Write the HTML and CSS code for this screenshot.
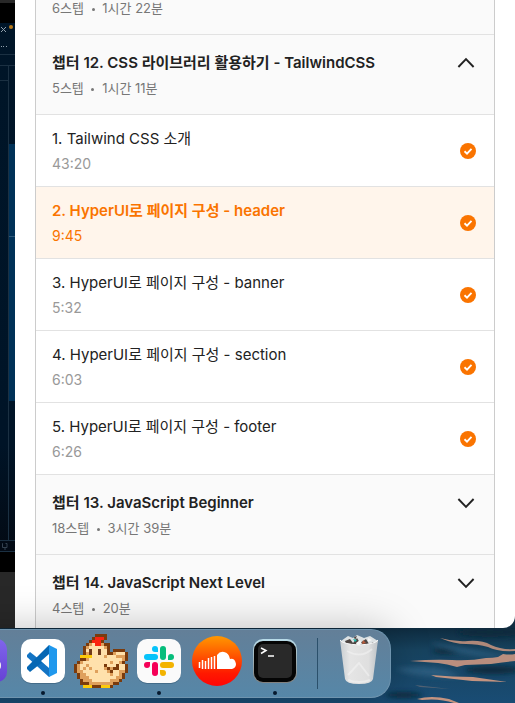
FILE: index.html
```html
<!DOCTYPE html>
<html lang="ko">
<head>
<meta charset="utf-8">
<meta name="viewport" content="width=device-width, initial-scale=1">
<title>챕터 목록</title>
<link rel="stylesheet" href="styles.css">
</head>
<body>
<svg class="defs" aria-hidden="true">
  <symbol id="check" viewBox="0 0 16 16"><circle cx="8" cy="8" r="8" fill="#fa7400"/><path d="M4.5 8.3 7 10.6l4.5-4.7" fill="none" stroke="#fff" stroke-width="1.9"/></symbol>
  <symbol id="chevron" viewBox="0 0 18 18"><path d="m1.4 5 7.6 7.8L16.6 5" fill="none" stroke="#222" stroke-width="1.9"/></symbol>
</svg>
<main class="screen">
  <div class="window">
    <svg class="editor" viewBox="0 0 15 628" preserveAspectRatio="none" aria-hidden="true">
      <defs><linearGradient id="navy" x2="0" y2="1"><stop offset="0" stop-color="#001528"/><stop offset=".8" stop-color="#001427"/><stop offset="1" stop-color="#030a14"/></linearGradient></defs>
      <path fill="#282828" d="M0 0h15v628H0z"/>
      <path fill="#000" d="M0 3h15v569H0z"/>
      <path fill="url(#navy)" d="M0 23h15v528H0z"/>
      <path fill="#003157" d="M8 144h7v257H8z"/>
      <path stroke="#1b3042" d="M0 54.5h15M0 65.5h15M0 80.5h8M8.500 65v475M0 540.500h15M0 551.500h15" fill="none"/>
      <path stroke="#2d5878" d="M9 236.500h6"/>
      <path stroke="#91a0ac" d="m1 27 5 5m0-5-5 5"/>
      <circle cx="11" cy="27" r="2" fill="#b87919"/>
      <path fill="#91a0ac" d="M1 46h1v1H1zM3 46h1v1H3zM6 46h1v1H6z"/>
      <path stroke="#344250" fill="none" d="M3 543.500h-.5v4H7v-4H5.500M4 549h2"/>
    </svg>
    <div class="page">
      <section class="course">
        <button class="chapter chapter-clipped"><span class="text"><span class="meta">6스텝 <i></i> 1시간 22분</span></span></button>
        <button class="chapter" aria-expanded="true"><span class="text"><span class="title">챕터 12. CSS 라이브러리 활용하기 - TailwindCSS</span><span class="meta">5스텝 <i></i> 1시간 11분</span></span><svg class="chevron up"><use href="#chevron"/></svg></button>
        <a class="lesson" href="#"><span class="text"><span class="title">1. Tailwind CSS 소개</span><span class="meta">43:20</span></span><svg class="check"><use href="#check"/></svg></a>
        <a class="lesson current" href="#"><span class="text"><span class="title">2. HyperUI로 페이지 구성 - header</span><span class="meta">9:45</span></span><svg class="check"><use href="#check"/></svg></a>
        <a class="lesson" href="#"><span class="text"><span class="title">3. HyperUI로 페이지 구성 - banner</span><span class="meta">5:32</span></span><svg class="check"><use href="#check"/></svg></a>
        <a class="lesson" href="#"><span class="text"><span class="title">4. HyperUI로 페이지 구성 - section</span><span class="meta">6:03</span></span><svg class="check"><use href="#check"/></svg></a>
        <a class="lesson" href="#"><span class="text"><span class="title">5. HyperUI로 페이지 구성 - footer</span><span class="meta">6:26</span></span><svg class="check"><use href="#check"/></svg></a>
        <button class="chapter" aria-expanded="false"><span class="text"><span class="title">챕터 13. JavaScript Beginner</span><span class="meta">18스텝 <i></i> 3시간 39분</span></span><svg class="chevron"><use href="#chevron"/></svg></button>
        <button class="chapter last" aria-expanded="false"><span class="text"><span class="title">챕터 14. JavaScript Next Level</span><span class="meta">4스텝 <i></i> 20분</span></span><svg class="chevron"><use href="#chevron"/></svg></button>
      </section>
    </div>
  </div>
  <div class="desktop">
    <svg class="water" viewBox="0 0 515 75" preserveAspectRatio="xMaxYMid slice" aria-hidden="true">
      <defs>
        <linearGradient id="sea" x2="0" y2="1"><stop offset="0" stop-color="#0e2b3f"/><stop offset=".3" stop-color="#17435f"/><stop offset="1" stop-color="#194c74"/></linearGradient>
        <filter id="soft" x="-20%" y="-50%" width="140%" height="200%"><feGaussianBlur stdDeviation=".7"/></filter>
        <filter id="softer" x="-20%" y="-100%" width="140%" height="300%"><feGaussianBlur stdDeviation="2.500"/></filter>
      </defs>
      <path fill="url(#sea)" d="M0 0h515v75H0z"/>
      <g filter="url(#softer)" fill="#0a2c3d"><ellipse cx="446" cy="23" rx="14" ry="3"/><ellipse cx="493" cy="42" rx="28" ry="4"/><ellipse cx="404" cy="67" rx="18" ry="3"/><ellipse cx="490" cy="4" rx="32" ry="5"/><path fill="#2b5c7e" d="M395 41q45-7 64 8-40 2-64-8M430 14q40 8 85 16-50 0-85-16"/></g>
      <g filter="url(#soft)" fill="#d69b82">
        <path opacity=".8" d="M440 10q14 4 28 3t23 4q10 5 24 4v2q-18 1-27-4-10-3-22-3t-26-6z"/>
        <path opacity=".85" d="M410 33q24-2 42-1 19 1 34-2 7 0 12-1l5-3q7 1 12 0v7q-12 1-24 3l-26 1-8 2q-10-3-19-4-13-1-28-2z"/>
        <path opacity=".9" d="M431 47q22 2 42 2l34 5-35-1-36-4z"/><path opacity=".9" d="M417 71q14-4 32 0l10 4h-5q-15-5-32-3z"/><path opacity=".3" d="M415 57l35 4-30-2z"/>
      </g>
    </svg>
    <nav class="dock" aria-label="Dock">
      <a class="app" href="#" aria-label="Notes"><svg viewBox="0 0 58 64"><defs><linearGradient id="vio" x2="0" y2="1"><stop stop-color="#8065ec"/><stop offset="1" stop-color="#6642d4"/></linearGradient></defs><rect x="7" y="10" width="44" height="43" rx="10" fill="url(#vio)"/><rect x="25" y="32" width="20" height="9" rx="4" fill="#eee"/></svg></a>
      <a class="app running" href="#" aria-label="Visual Studio Code"><svg viewBox="0 0 58 64"><rect x="7" y="11" width="44" height="44" rx="10" fill="#26465f" opacity=".4"/><rect x="7" y="10" width="44" height="44" rx="10" fill="#fff"/><path d="m13 26 3-3 24 19-5 6L13 28z" fill="#1374c4"/><path d="M13 38 35 16l5 8-24 19-3-3z" fill="#0567b4"/><path d="m35 16 8 4v24l-8 4z" fill="#1f98ed"/><path d="M35 25v14l-8-7z" fill="#fff"/></svg></a>
      <a class="app" href="#" aria-label="Chicken"><svg viewBox="0 0 58 64"><g id="chicken" transform="translate(2 5)" shape-rendering="crispEdges"></g></svg></a>
      <a class="app running" href="#" aria-label="Slack"><svg viewBox="0 0 58 64"><rect x="7" y="11" width="44" height="44" rx="10" fill="#26465f" opacity=".4"/><rect x="7" y="10" width="44" height="44" rx="10" fill="#fafafa"/>
        <g fill="#06c3fa"><rect x="14" y="25" width="14" height="6" rx="3"/><path d="M28 23h-3a3 3 0 1 1 3-3z"/></g>
        <g fill="#06bd7b"><rect x="30" y="17" width="6" height="14" rx="3"/><path d="M38 31v-3a3 3 0 1 1 3 3z"/></g>
        <g fill="#f3b300"><rect x="30" y="33" width="14" height="6" rx="3"/><path d="M30 41h3a3 3 0 1 1-3 3z"/></g>
        <g fill="#f50057"><rect x="22" y="33" width="6" height="14" rx="3"/><path d="M20 33v3a3 3 0 1 1-3-3z"/></g></svg></a>
      <a class="app" href="#" aria-label="SoundCloud"><svg viewBox="0 0 58 64"><defs><linearGradient id="sun" x2="0" y2="1"><stop stop-color="#ff9800"/><stop offset=".75" stop-color="#ff1900"/><stop offset="1" stop-color="#ff0505"/></linearGradient></defs><circle cx="29" cy="32" r="25" fill="url(#sun)"/><path d="M29 40V26q3-4 7-3 5 1 6 7 5-1 6 5 0 4-4 5z" fill="#fff"/><path d="M11.500 33v6M14.500 31v9M17.500 32v8M20.500 29v11M23.500 28v12M26.500 27v13" stroke="#fff" stroke-width="1.5"/></svg></a>
      <a class="app running" href="#" aria-label="Terminal"><svg viewBox="0 0 58 64"><defs><linearGradient id="rim" x2="0" y2="1"><stop stop-color="#b9dce9"/><stop offset="1" stop-color="#817f7c"/></linearGradient></defs><rect x="7" y="10" width="44" height="44" rx="10" fill="url(#rim)"/><rect x="8" y="12" width="42" height="41" rx="9" fill="#050505"/><rect x="12" y="15" width="34" height="34" rx="5" fill="#292929"/><path d="m15 19 5 2.500-5 3M22 27h6" fill="none" stroke="#fff" stroke-width="1.500"/></svg></a>
      <span class="separator"></span>
      <a class="app" href="#" aria-label="Trash"><svg viewBox="0 0 58 64"><defs><linearGradient id="bin"><stop stop-color="#c9ced1"/><stop offset=".25" stop-color="#e5e5e5"/><stop offset=".75" stop-color="#dfdfdf"/><stop offset="1" stop-color="#bec3c7"/></linearGradient></defs><path d="m11 12 7-5 5 2 4-3 7 3 6-2 8 5-2 5H12z" fill="#dce1e3"/><path d="m15 12 5-2 3 4 4-5 3 5 6-4 3 5 5-2-3 4H17zM24 8l3-1-2 4z" fill="#4d4542"/><path d="m23 10 4 1-2 2z" fill="#18bdae"/><path d="m33 11 3 3-4 1z" fill="#b95b3b"/><path d="m26 14 4-3 2 4-5 2zM38 9l4 2-4 2z" fill="#f5f5f5"/><path d="M10 11q2 4 19 5 17-1 19-5l-5 39q-1 5-14 5t-14-5z" fill="url(#bin)"/><path d="M10 11q2 4 19 5 17-1 19-5" fill="none" stroke="#f7f7f7"/><path d="M17 22q14 8 25-2M18 46l11-12 10 13M18 51q11 4 22 0" fill="none" stroke="#f6f6f6" stroke-width="2" opacity=".5"/></svg></a>
    </nav>
  </div>
</main>
<script src="sprite.js"></script>
</body>
</html>
```
FILE: styles.css
```css
* { box-sizing: border-box; }
body {
  margin: 0;
  font-family: Inter, "Noto Sans CJK KR", sans-serif;
  background: #17435f;
}
.defs { position: absolute; width: 0; height: 0; }
.screen {
  display: flex;
  flex-direction: column;
  min-height: 100vh;
  overflow: hidden;
  background: #102d41;
}
.window {
  display: flex;
  flex: 1;
  overflow: hidden;
  background: #fff;
  border-bottom-right-radius: 12px;
}
.editor { flex: none; align-self: stretch; width: 15px; height: auto; }
.page { flex: 1; min-width: 0; padding: 0 20px; }
.course {
  height: 100%;
  border: solid #ccc;
  border-width: 0 1px;
}
.chapter, .lesson {
  display: flex;
  justify-content: space-between;
  width: 100%;
  border: 0;
  border-bottom: 1px solid #e2e2e2;
  padding: 0 16px;
  font-family: inherit;
  text-align: left;
  text-decoration: none;
  color: #222;
}
.chapter { height: 80px; padding-top: 16px; background: #fafafa; }
.chapter-clipped { height: 35px; padding-top: 0; }
.last { height: 73px; border-bottom: 0; }
.lesson { height: 72px; padding-top: 12px; align-items: flex-start; }
.text { display: flex; flex-direction: column; gap: 3px; }
.title { font-size: 15px; line-height: 24px; }
.meta { font-size: 14px; line-height: 20px; color: #777; }
.chapter .title, .current .title { font-weight: 600; }
.chapter .meta { font-size: 13px; }
.lesson .meta { color: #999; }
.chapter-clipped .meta { line-height: 16px; }
.meta i {
  display: inline-block;
  width: 3px;
  height: 3px;
  margin: 0 4px;
  border-radius: 50%;
  background: #777;
  vertical-align: middle;
}
.chevron { flex: none; width: 18px; height: 18px; margin: 3px; }
.up { transform: scaleY(-1); }
.check { flex: none; width: 16px; height: 16px; margin: 16px 2px; }
.current { background: #fff5eb; }
.lesson.current .title, .lesson.current .meta { color: #fa7400; }
.desktop { position: relative; padding: 1px 0 5px; }
.water { position: absolute; inset: 0; width: 100%; height: 100%; }
.dock {
  position: relative;
  display: flex;
  width: max-content;
  height: 69px;
  margin-left: -60px;
  padding: 0 2px 0 16px;
  border: 1px solid #6f94ae;
  border-width: 1px 1px 1px 0;
  border-radius: 20px;
  background: linear-gradient(#637f98, #5687a8);
  box-shadow: 0 0 40px rgba(0, 0, 0, .25);
}
.app { position: relative; width: 58px; }
.app svg { display: block; width: 58px; height: 64px; margin-top: -1px; }
.running::after {
  content: "";
  position: absolute;
  bottom: 2px;
  left: 27px;
  width: 4px;
  height: 4px;
  border-radius: 50%;
  background: #06192e;
}
.separator { width: 1px; margin: 8px 12px 8px 13px; background: #2b506b; }
```
FILE: sprite.js
```js
const palette = { D: "#7a3b0d", R: "#fb2410", r: "#85190d", C: "#ffe1ac", T: "#dfa05c", Y: "#fcca0a", K: "#703b1c" };
const rows = [
  ".......DDDD.......",
  "......DRRRD.......",
  ".....DRRRD........",
  "....DTCRRTDD......",
  "...DTCCCCCTD......",
  "...DCKCCKCCD.DDDD.",
  "...DTKCCKCCDDTCCCD",
  "..YYYYCCCCTCCCTTTD",
  "..DDTCCCCCCCCCCCTD",
  ".DTCCCCCCCCCTCCTD.",
  "DTCCTCCCCCDCCCDCCD",
  "DTCTCTCCCCTDTDDCCD",
  "DTTCCCCTCCCTDCCTTD",
  ".DTTCCCCCCCCTCCTD.",
  ".DTTTCCCCCCCCCTTD.",
  "..DTTTCCCCCCTTTD..",
  "..DDDTTTTTTTTDD...",
  "...YYYDDDYYYD....."
];
const sprite = document.getElementById("chicken");
rows.forEach((row, y) => [...row].forEach((key, x) => {
  if (!palette[key]) return;
  const cell = document.createElementNS("http://www.w3.org/2000/svg", "rect");
  Object.entries({ x: x * 3, y: y * 3, width: 3, height: 3, fill: palette[key] })
    .forEach(([name, value]) => cell.setAttribute(name, value));
  sprite.append(cell);
}));
```
